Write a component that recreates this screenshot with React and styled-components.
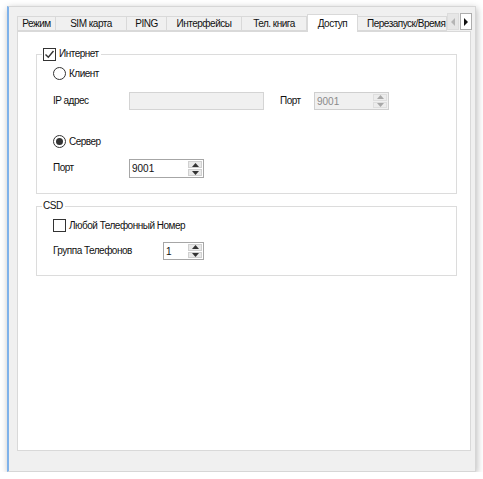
import React from "react";
import styled, { createGlobalStyle } from "styled-components";

const Global = createGlobalStyle`
  html, body { margin: 0; padding: 0; background: #ffffff; }
  body {
    font-family: "Liberation Sans", Arial, sans-serif;
    font-size: 10px;
    letter-spacing: -0.5px;
    color: #111111;
  }
  * { box-sizing: border-box; }
`;

const Window = styled.div`
  margin: 6px 0 0 7px;
  width: 469px;
  height: 466px;
  background: #f0f0f0;
  border: 1px solid #d6d6d6;
  border-left: 2px solid #7fb2ea;
  box-shadow: 1px 2px 7px rgba(0, 0, 0, 0.28);
  padding: 6px 5px 0 8px;
  display: flex;
  flex-direction: column;
`;

const TabBar = styled.div`
  display: flex;
  align-items: flex-end;
  height: 18px;
`;

const Tab = styled.div`
  width: ${(p) => p.$w}px;
  flex: none;
  height: ${(p) => (p.$active ? 18 : 15)}px;
  margin-bottom: ${(p) => (p.$active ? -1 : 0)}px;
  background: ${(p) => (p.$active ? "#ffffff" : "#f0f0f0")};
  border: 1px solid #d9d9d9;
  border-bottom: ${(p) => (p.$active ? "none" : "1px solid #d9d9d9")};
  border-left: ${(p) => (p.$first || p.$active ? "1px solid #d9d9d9" : "none")};
  display: flex;
  align-items: center;
  justify-content: center;
  white-space: nowrap;
  overflow: hidden;
  position: relative;
  z-index: ${(p) => (p.$active ? 2 : 1)};
`;

const ClippedTab = styled(Tab)`
  justify-content: flex-start;
  padding-left: 9px;
`;

const Scroller = styled.div`
  display: flex;
  gap: 1px;
  height: 17px;
  margin-left: auto;
  margin-right: 3px;
  align-self: flex-start;
`;

const ScrollBtn = styled.div`
  width: 12px;
  height: 17px;
  background: ${(p) => (p.$enabled ? "#ffffff" : "#e6e6e6")};
  border: 1px solid ${(p) => (p.$enabled ? "#adadad" : "#dcdcdc")};
  display: flex;
  align-items: center;
  justify-content: center;
`;

const Pane = styled.div`
  width: 454px;
  height: 420px;
  background: #ffffff;
  border: 1px solid #d9d9d9;
  padding: 15px 13px 0 18px;
  display: flex;
  flex-direction: column;
  gap: 5px;
`;

const Group = styled.fieldset`
  margin: 0;
  padding: 0;
  border: 1px solid #dcdcdc;
  min-width: 0;
`;

const Legend = styled.legend`
  margin-left: 5px;
  padding: 0 2px 0 1px;
  height: 14px;
  line-height: 14px;
  display: flex;
  align-items: center;
  gap: 3px;
`;

const GroupBody = styled.div`
  display: flex;
  flex-direction: column;
  padding: 0 0 ${(p) => p.$pb}px 16px;
`;

const Row = styled.div`
  display: flex;
  align-items: center;
  height: ${(p) => p.$h}px;
  margin-top: ${(p) => p.$mt}px;
`;

const Label = styled.div`
  width: ${(p) => p.$w}px;
  margin-left: ${(p) => p.$ml || 0}px;
  flex: none;
  white-space: nowrap;
  margin-top: -2px;
`;

const BoxMark = styled.span`
  width: 13px;
  height: 13px;
  flex: none;
  border: 1px solid #333333;
  background: #ffffff;
  display: inline-flex;
  align-items: center;
  justify-content: center;
`;

const RadioMark = styled.span`
  width: 13px;
  height: 13px;
  flex: none;
  border: 1px solid #333333;
  border-radius: 50%;
  background: #ffffff;
  display: inline-flex;
  align-items: center;
  justify-content: center;
  &::after {
    content: "";
    width: 7px;
    height: 7px;
    border-radius: 50%;
    background: ${(p) => (p.$on ? "#333333" : "transparent")};
  }
`;

const Choice = styled.label`
  display: flex;
  align-items: center;
  gap: 3px;
  white-space: nowrap;
`;

const TextField = styled.div`
  width: ${(p) => p.$w}px;
  height: 18px;
  flex: none;
  background: #f0f0f0;
  border: 1px solid #d4d4d4;
`;

const Spin = styled.div`
  width: ${(p) => p.$w}px;
  height: ${(p) => p.$h || 19}px;
  flex: none;
  display: flex;
  background: ${(p) => (p.$disabled ? "#f0f0f0" : "#ffffff")};
  border: 1px solid ${(p) => (p.$disabled ? "#cfcfcf" : "#a6a6a6")};
  color: ${(p) => (p.$disabled ? "#8a8a8a" : "#111111")};
`;

const SpinValue = styled.div`
  flex: 1;
  padding-left: 2px;
  display: flex;
  align-items: center;
  letter-spacing: 0;
`;

const SpinButtons = styled.div`
  width: 14px;
  margin: 1px 1px 1px 0;
  display: flex;
  flex-direction: column;
  gap: 1px;
`;

const SpinBtn = styled.div`
  flex: 1;
  background: ${(p) => (p.$disabled ? "#ececec" : "#e9e9e9")};
  border: 1px solid ${(p) => (p.$disabled ? "#dedede" : "#d0d0d0")};
  display: flex;
  align-items: center;
  justify-content: center;
`;

const Tri = ({ dir, color }) => {
  const pts = {
    up: "0,4 3.5,0 7,4",
    down: "0,0 3.5,4 7,0",
    left: "4,0 0,4 4,8",
    right: "0,0 4,4 0,8",
  }[dir];
  const vert = dir === "up" || dir === "down";
  return (
    <svg width={vert ? 7 : 4} height={vert ? 4 : 8} viewBox={vert ? "0 0 7 4" : "0 0 4 8"}>
      <polygon points={pts} fill={color} />
    </svg>
  );
};

const Check = () => (
  <svg width="11" height="11" viewBox="0 0 11 11">
    <path d="M1.5 5.5 L4.3 8.3 L9.5 2" fill="none" stroke="#333" strokeWidth="1.4" />
  </svg>
);

const SpinBox = ({ value, w, h, disabled }) => (
  <Spin $w={w} $h={h} $disabled={disabled}>
    <SpinValue>{value}</SpinValue>
    <SpinButtons>
      <SpinBtn $disabled={disabled}>
        <Tri dir="up" color={disabled ? "#a8a8a8" : "#333"} />
      </SpinBtn>
      <SpinBtn $disabled={disabled}>
        <Tri dir="down" color={disabled ? "#a8a8a8" : "#333"} />
      </SpinBtn>
    </SpinButtons>
  </Spin>
);

const tabs = [
  { t: "Режим", w: 39 },
  { t: "SIM карта", w: 71 },
  { t: "PING", w: 40 },
  { t: "Интерфейсы", w: 75 },
  { t: "Тел. книга", w: 65 },
  { t: "Доступ", w: 51, active: true },
];

export default function App() {
  return (
    <>
      <Global />
      <Window>
        <TabBar>
          {tabs.map((tb, i) => (
            <Tab key={tb.t} $w={tb.w} $active={tb.active} $first={i === 0}>
              {tb.t}
            </Tab>
          ))}
          <ClippedTab $w={89}>Перезапуск/Время</ClippedTab>
          <Scroller>
            <ScrollBtn>
              <Tri dir="left" color="#b5b5b5" />
            </ScrollBtn>
            <ScrollBtn $enabled>
              <Tri dir="right" color="#111" />
            </ScrollBtn>
          </Scroller>
        </TabBar>
        <Pane>
          <Group>
            <Legend>
              <BoxMark>
                <Check />
              </BoxMark>
              Интернет
            </Legend>
            <GroupBody $pb={15}>
              <Row $h={14} $mt={5}>
                <Choice>
                  <RadioMark />
                  Клиент
                </Choice>
              </Row>
              <Row $h={18} $mt={12}>
                <Label $w={76}>IP адрес</Label>
                <TextField $w={135} />
                <Label $w={34} $ml={16}>Порт</Label>
                <SpinBox value="9001" w={75} h={18} disabled />
              </Row>
              <Row $h={14} $mt={24}>
                <Choice>
                  <RadioMark $on />
                  Сервер
                </Choice>
              </Row>
              <Row $h={19} $mt={11}>
                <Label $w={76}>Порт</Label>
                <SpinBox value="9001" w={75} />
              </Row>
            </GroupBody>
          </Group>
          <Group>
            <Legend>CSD</Legend>
            <GroupBody $pb={15}>
              <Row $h={13} $mt={6}>
                <Choice>
                  <BoxMark />
                  Любой Телефонный Номер
                </Choice>
              </Row>
              <Row $h={18} $mt={10}>
                <Label $w={110}>Группа Телефонов</Label>
                <SpinBox value="1" w={41} h={18} />
              </Row>
            </GroupBody>
          </Group>
        </Pane>
      </Window>
    </>
  );
}
